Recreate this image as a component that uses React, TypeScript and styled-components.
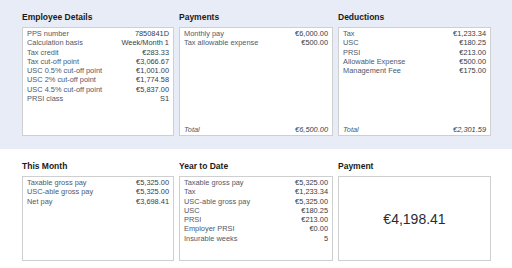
import React from "react";
import styled, { createGlobalStyle } from "styled-components";

const Global = createGlobalStyle`
  html, body { margin: 0; padding: 0; background: #ffffff; }
  body { font-family: "Liberation Sans", Arial, sans-serif; width: 512px; height: 268px; overflow: hidden; }
`;

const Band = styled.section<{ $top?: boolean }>`
  background: ${(p) => (p.$top ? "#e7ecf6" : "#ffffff")};
  height: ${(p) => (p.$top ? "149px" : "119px")};
  box-sizing: border-box;
  padding: 11px 0 0 22px;
`;

const Grid = styled.div`
  display: grid;
  grid-template-columns: 152px 154px 153px;
  column-gap: 5px;
`;

const Column = styled.div`
  display: flex;
  flex-direction: column;
`;

const Title = styled.h2`
  margin: 0 0 4px 0;
  font-size: 8.5px;
  line-height: 12px;
  font-weight: bold;
  color: #1a1a1a;
`;

const Card = styled.div<{ $h: number; $center?: boolean }>`
  box-sizing: border-box;
  height: ${(p) => p.$h}px;
  background: #ffffff;
  border: 1px solid #cfcfcf;
  padding: 1px 4px 1px 4px;
  display: flex;
  flex-direction: column;
  justify-content: ${(p) => (p.$center ? "center" : "flex-start")};
  align-items: ${(p) => (p.$center ? "center" : "stretch")};
`;

const Row = styled.div<{ $total?: boolean }>`
  display: flex;
  justify-content: space-between;
  font-size: 7.4px;
  line-height: 9.3px;
  font-style: ${(p) => (p.$total ? "italic" : "normal")};
  margin-top: ${(p) => (p.$total ? "auto" : "0")};
`;

const Label = styled.span`
  color: #4e596c;
`;

const Value = styled.span`
  color: #353c48;
`;

const Big = styled.div`
  font-size: 14px;
  color: #262d3a;
`;

type Item = [string, string];

const Block = ({ title, rows, total, h }: { title: string; rows: Item[]; total?: string; h: number }) => (
  <Column>
    <Title>{title}</Title>
    <Card $h={h}>
      {rows.map(([l, v]) => (
        <Row key={l}>
          <Label>{l}</Label>
          <Value>{v}</Value>
        </Row>
      ))}
      {total && (
        <Row $total>
          <Label>Total</Label>
          <Value>{total}</Value>
        </Row>
      )}
    </Card>
  </Column>
);

export default function App() {
  return (
    <>
      <Global />
      <Band $top>
        <Grid>
          <Block
            title="Employee Details"
            h={109}
            rows={[
              ["PPS number", "7850841D"],
              ["Calculation basis", "Week/Month 1"],
              ["Tax credit", "€283.33"],
              ["Tax cut-off point", "€3,066.67"],
              ["USC 0.5% cut-off point", "€1,001.00"],
              ["USC 2% cut-off point", "€1,774.58"],
              ["USC 4.5% cut-off point", "€5,837.00"],
              ["PRSI class", "S1"],
            ]}
          />
          <Block
            title="Payments"
            h={109}
            rows={[
              ["Monthly pay", "€6,000.00"],
              ["Tax allowable expense", "€500.00"],
            ]}
            total="€6,500.00"
          />
          <Block
            title="Deductions"
            h={109}
            rows={[
              ["Tax", "€1,233.34"],
              ["USC", "€180.25"],
              ["PRSI", "€213.00"],
              ["Allowable Expense", "€500.00"],
              ["Management Fee", "€175.00"],
            ]}
            total="€2,301.59"
          />
        </Grid>
      </Band>
      <Band>
        <Grid>
          <Block
            title="This Month"
            h={85}
            rows={[
              ["Taxable gross pay", "€5,325.00"],
              ["USC-able gross pay", "€5,325.00"],
              ["Net pay", "€3,698.41"],
            ]}
          />
          <Block
            title="Year to Date"
            h={85}
            rows={[
              ["Taxable gross pay", "€5,325.00"],
              ["Tax", "€1,233.34"],
              ["USC-able gross pay", "€5,325.00"],
              ["USC", "€180.25"],
              ["PRSI", "€213.00"],
              ["Employer PRSI", "€0.00"],
              ["Insurable weeks", "5"],
            ]}
          />
          <Column>
            <Title>Payment</Title>
            <Card $h={85} $center>
              <Big>€4,198.41</Big>
            </Card>
          </Column>
        </Grid>
      </Band>
    </>
  );
}
